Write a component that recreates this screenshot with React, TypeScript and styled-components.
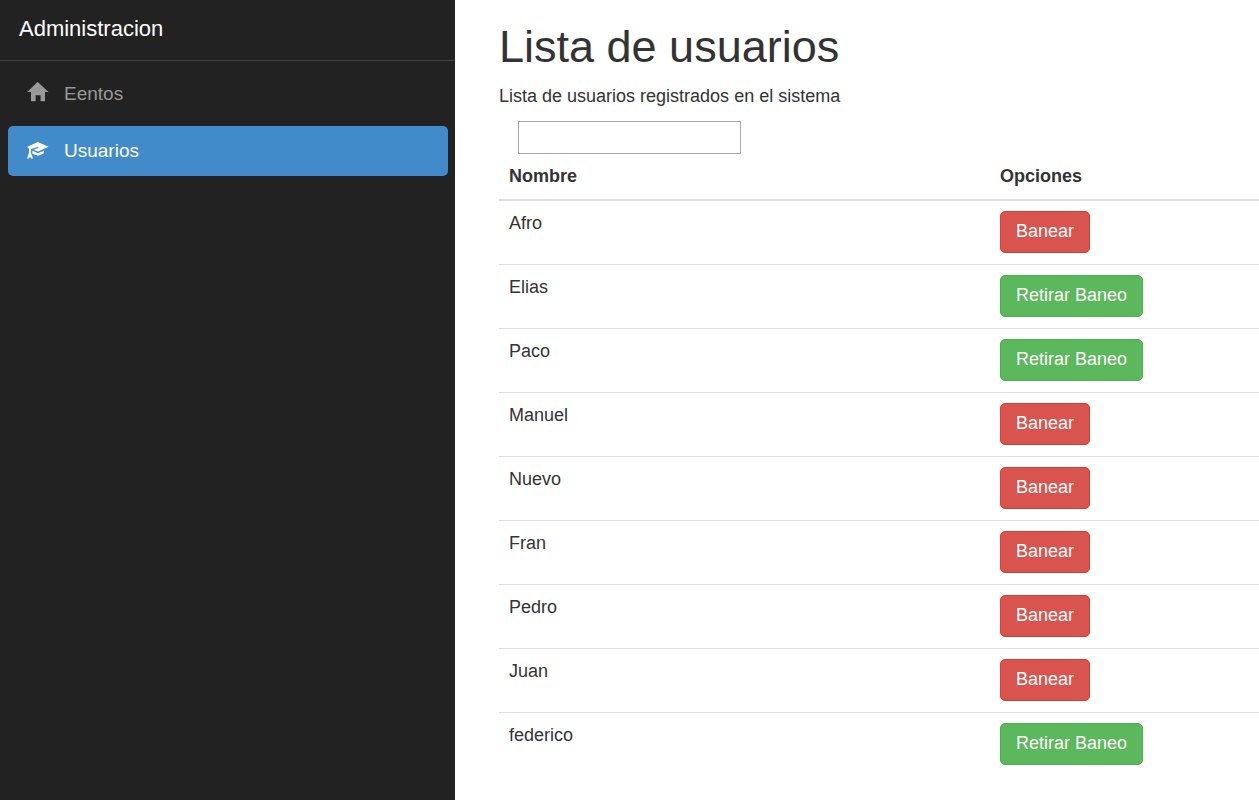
import React, { useState } from "react";
import styled, { createGlobalStyle } from "styled-components";

const GlobalStyle = createGlobalStyle`
  *, *::before, *::after { box-sizing: border-box; }
  body {
    margin: 0;
    background: #fff;
    color: #333;
    font-family: "Liberation Sans", Arial, sans-serif;
    font-size: 18px;
    line-height: 25px;
  }
`;

const Page = styled.div`
  display: flex;
  min-height: 100vh;
`;

const Sidebar = styled.aside`
  flex: 0 0 455px;
  background: #222;
`;

const Brand = styled.a`
  display: block;
  padding: 16px 19px 19px;
  border-bottom: 1px solid #444;
  color: #fff;
  font-size: 22px;
  text-decoration: none;
`;

const NavList = styled.ul`
  display: flex;
  flex-direction: column;
  gap: 7px;
  margin: 0;
  padding: 8px 7px 8px 8px;
  list-style: none;
`;

const NavLink = styled.a<{ $active?: boolean }>`
  display: flex;
  align-items: center;
  gap: 15px;
  height: 50px;
  padding: 0 18px 2px;
  border-radius: 5px;
  background: ${(p) => (p.$active ? "#428bca" : "transparent")};
  color: ${(p) => (p.$active ? "#fff" : "#999")};
  font-size: 19px;
  text-decoration: none;
`;

const Icon = styled.svg`
  width: 23px;
  height: 22px;
  fill: currentColor;
`;

const Main = styled.main`
  flex: 1;
  min-width: 0;
  padding: 22px 0 20px 44px;
`;

const Title = styled.h1`
  margin: 0 0 12px;
  font-size: 45px;
  font-weight: 400;
  line-height: 50px;
`;

const Intro = styled.p`
  margin: 0 0 12px;
`;

const Search = styled.input`
  display: block;
  width: 223px;
  height: 33px;
  margin-left: 19px;
  padding: 2px 4px;
  border: 1px solid #a9a9a9;
  background: #fff;
  color: inherit;
  font: inherit;
`;

const Table = styled.table`
  width: 100%;
  border-collapse: separate;
  border-spacing: 0;
  table-layout: fixed;
`;

const HeadCell = styled.th<{ $width?: string }>`
  width: ${(p) => p.$width ?? "auto"};
  padding: 10px;
  border-bottom: 2px solid #ddd;
  text-align: left;
`;

const Cell = styled.td`
  padding: 10px 10px 11px;
  border-bottom: 1px solid #ddd;
  vertical-align: top;

  tr:last-child > & { border-bottom: 0; }
`;

const Button = styled.button<{ $banned: boolean }>`
  display: block;
  height: 42px;
  padding: 0 15px 2px;
  border: 1px solid ${(p) => (p.$banned ? "#4cae4c" : "#d43f3a")};
  border-radius: 5px;
  background: ${(p) => (p.$banned ? "#5cb85c" : "#d9534f")};
  color: #fff;
  font: inherit;
  cursor: pointer;
`;

const initialUsers = [
  { name: "Afro", banned: false },
  { name: "Elias", banned: true },
  { name: "Paco", banned: true },
  { name: "Manuel", banned: false },
  { name: "Nuevo", banned: false },
  { name: "Fran", banned: false },
  { name: "Pedro", banned: false },
  { name: "Juan", banned: false },
  { name: "federico", banned: true },
];

const HomeIcon = () => (
  <Icon viewBox="0 0 23 22" aria-hidden="true">
    <path d="M12 0.2 22.6 10H19V19.2H14.6V13.2H9.6V19.2H5V10H1.2L11.2.2Q11.6-.1 12 .2Z" />
  </Icon>
);

const EducationIcon = () => (
  <Icon viewBox="0 0 23 22" aria-hidden="true">
    <path d="M11.7 3 22.6 7.8 12 12.6 7.4 11 12.6 8.7 12 7.9 5 10V14L7 19.4H5.3L4.1 17.4 2.8 19.4H1L3 14V9.2L1 8Z" />
    <path d="M6.3 11.8 11.9 14.2 18.3 11.5 17.6 14.2Q14.8 16.6 12 16.6 9 16.6 6.3 14.5Z" />
  </Icon>
);

export default function App() {
  const [users, setUsers] = useState(initialUsers);
  const [query, setQuery] = useState("");

  const toggle = (name: string) =>
    setUsers((list) =>
      list.map((u) => (u.name === name ? { ...u, banned: !u.banned } : u))
    );

  const visible = users.filter((u) =>
    u.name.toLowerCase().includes(query.toLowerCase())
  );

  return (
    <>
      <GlobalStyle />
      <Page>
        <Sidebar>
          <Brand href="#">Administracion</Brand>
          <nav>
            <NavList>
              <li>
                <NavLink href="#eventos"><HomeIcon />Eentos</NavLink>
              </li>
              <li>
                <NavLink href="#usuarios" $active aria-current="page">
                  <EducationIcon />Usuarios
                </NavLink>
              </li>
            </NavList>
          </nav>
        </Sidebar>
        <Main>
          <Title>Lista de usuarios</Title>
          <Intro id="intro">Lista de usuarios registrados en el sistema</Intro>
          <Search
            type="text"
            aria-labelledby="intro"
            value={query}
            onChange={(e) => setQuery(e.target.value)}
          />
          <Table>
            <thead>
              <tr>
                <HeadCell scope="col" $width="64.6%">Nombre</HeadCell>
                <HeadCell scope="col">Opciones</HeadCell>
              </tr>
            </thead>
            <tbody>
              {visible.map((u) => (
                <tr key={u.name}>
                  <Cell>{u.name}</Cell>
                  <Cell>
                    <Button type="button" $banned={u.banned} onClick={() => toggle(u.name)}>
                      {u.banned ? "Retirar Baneo" : "Banear"}
                    </Button>
                  </Cell>
                </tr>
              ))}
            </tbody>
          </Table>
        </Main>
      </Page>
    </>
  );
}
